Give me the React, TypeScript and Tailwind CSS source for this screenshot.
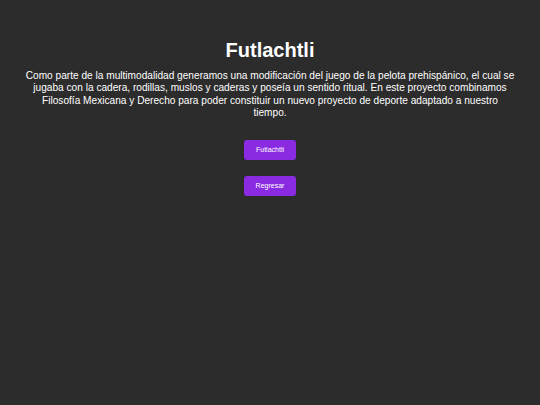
import React from 'react';

export default function App() {
  return (
    <div className="min-h-[405px] w-full bg-[#2c2c2c] text-white text-center font-['Liberation_Sans',Arial,sans-serif] pt-[37px]">
      <h1 className="text-[20px] font-bold leading-[26px]">Futlachtli</h1>
      <p className="mx-auto w-[489px] mt-[7px] text-[10.15px] leading-[12.3px]">
        Como parte de la multimodalidad generamos una modificación del juego de la pelota prehispánico, el cual se jugaba con la cadera, rodillas, muslos y caderas y poseía un sentido ritual. En este proyecto combinamos Filosofía Mexicana y Derecho para poder constituir un nuevo proyecto de deporte adaptado a nuestro tiempo.
      </p>
      <div className="flex flex-col items-center gap-[16px] mt-[21px]">
        <button className="w-[52px] h-[20px] rounded-[3px] bg-[#8a2be2] text-white text-[7px]">Futlachtli</button>
        <button className="w-[52px] h-[20px] rounded-[3px] bg-[#8a2be2] text-white text-[7px]">Regresar</button>
      </div>
    </div>
  );
}
